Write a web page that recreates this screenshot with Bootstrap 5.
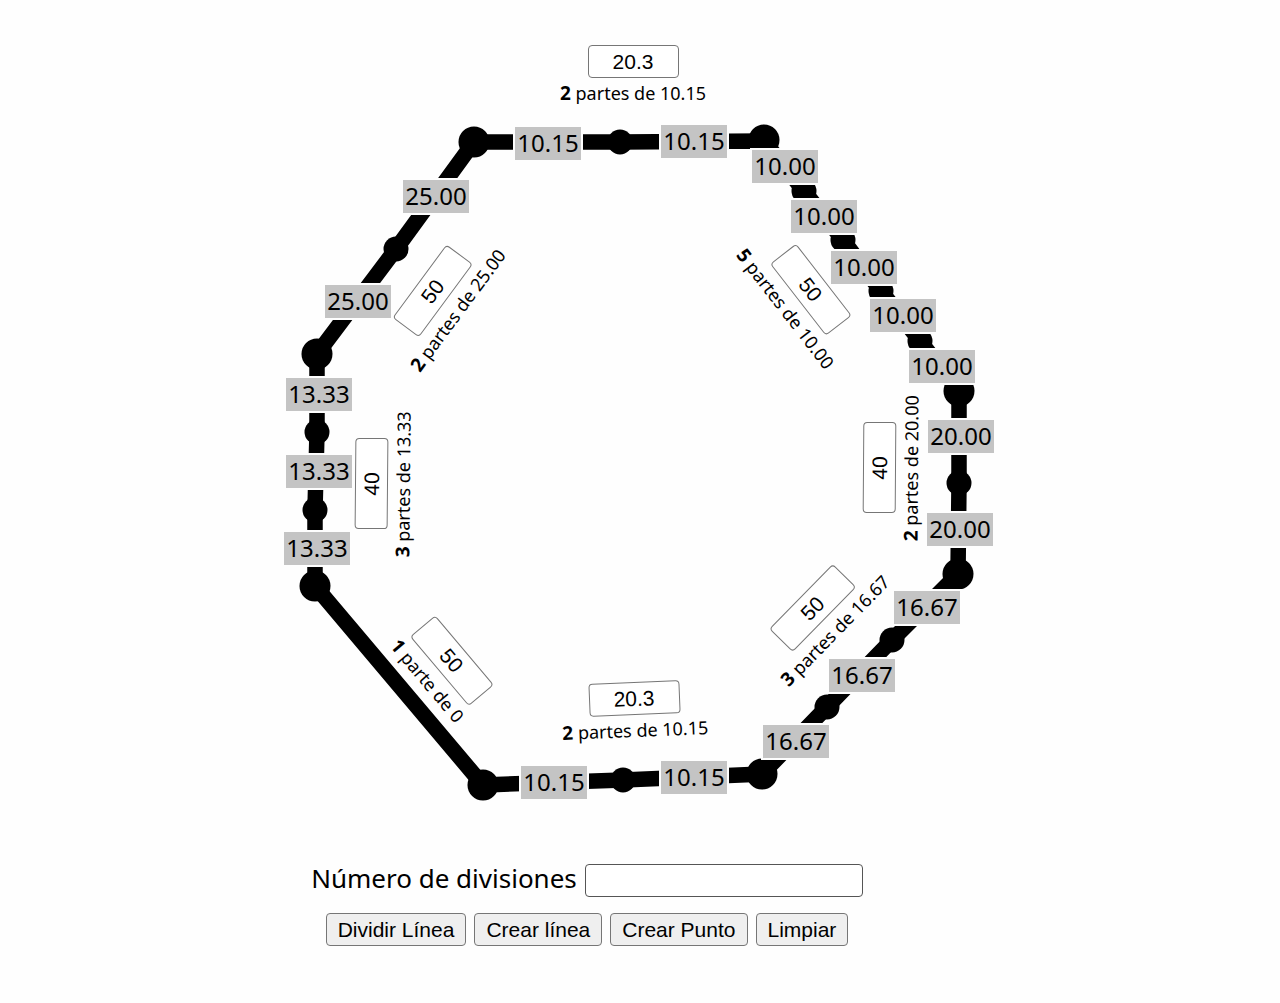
<!DOCTYPE html>
<html lang="es">
<head>
<meta charset="utf-8">
<meta name="viewport" content="width=device-width, initial-scale=1">
<title>Divisiones</title>
<link rel="stylesheet" href="https://cdn.jsdelivr.net/npm/bootstrap@5.3.0/dist/css/bootstrap.min.css">
<style>
  body { font-family: "Noto Sans", sans-serif; color: #000; background: #fefefe; }
  .board { width: 720px; }
  .plane { height: 840px; }
  .plane svg { width: 720px; height: 840px; }
  /* items on the plane are centred on their own point (--x, --y) */
  .measure, .side { left: calc(var(--x) * 1px); top: calc(var(--y) * 1px); }
  .measure {
    width: 66px; height: 33px; margin: -16px 0 0 -33px;
    background: #c4c4c4; outline: 2px solid #fefefe;
    font-size: 24px; line-height: 31px; text-align: center;
  }
  .side {
    width: 160px; height: 66px; margin: -16px 0 0 -80px;
    transform: rotate(calc(var(--a) * 1deg)); transform-origin: 80px 16px;
  }
  .field, .action {
    font-family: "Liberation Sans", Arial, sans-serif; font-size: 21px; line-height: 24px;
    color: #000; border: 1px solid #767676; border-radius: 4px; height: 33px;
  }
  .field { background: #fff; padding: 0 4px; }
  .side .field { width: 91px; text-align: center; }
  .side label { font-size: 18px; line-height: 30px; white-space: nowrap; }
  .side strong { font-size: 19px; }
  .controls { width: 614px; }
  .controls label { font-size: 26px; line-height: 28px; }
  .count { width: 278px; border-color: #555; }
  .action { background: #efefef; padding: 0 11px; }
</style>
<script src="https://cdn.jsdelivr.net/npm/bootstrap@5.3.0/dist/js/bootstrap.bundle.min.js"></script>
</head>
<body>
<main class="board mx-auto">
  <section class="plane position-relative">
    <svg viewBox="280 0 720 840" class="d-block" aria-hidden="true">
      <path d="M474 142 620 142 764 141 804 191 843 240 881 291 920 341 959 391 959 483 958 574 892 640 827 707 762 774 623 780 483 785 315 586 315 510 317 432 317 354 396 249Z" fill="none" stroke="#000" stroke-width="15.5"/>
      <g>
        <circle cx="474" cy="142" r="15.5"/><circle cx="764" cy="140" r="15.5"/>
        <circle cx="959" cy="391" r="15.5"/><circle cx="958" cy="574" r="15.5"/>
        <circle cx="762" cy="774" r="15.5"/><circle cx="483" cy="785" r="15.5"/>
        <circle cx="315" cy="586" r="15.5"/><circle cx="317" cy="354" r="15.5"/>
      </g>
      <g>
        <circle cx="620" cy="142" r="12.5"/><circle cx="804" cy="191" r="12.5"/>
        <circle cx="843" cy="240" r="12.5"/><circle cx="881" cy="291" r="12.5"/>
        <circle cx="920" cy="341" r="12.5"/><circle cx="959" cy="483" r="12.5"/>
        <circle cx="892" cy="640" r="12.5"/><circle cx="827" cy="707" r="12.5"/>
        <circle cx="623" cy="780" r="12.5"/><circle cx="315" cy="510" r="12.5"/>
        <circle cx="317" cy="432" r="12.5"/><circle cx="396" cy="249" r="12.5"/>
      </g>
    </svg>

    <span class="measure position-absolute" style="--x:268;--y:143">10.15</span>
    <span class="measure position-absolute" style="--x:414;--y:141">10.15</span>
    <span class="measure position-absolute" style="--x:505;--y:166">10.00</span>
    <span class="measure position-absolute" style="--x:544;--y:216">10.00</span>
    <span class="measure position-absolute" style="--x:584;--y:267">10.00</span>
    <span class="measure position-absolute" style="--x:623;--y:315">10.00</span>
    <span class="measure position-absolute" style="--x:662;--y:366">10.00</span>
    <span class="measure position-absolute" style="--x:681;--y:436">20.00</span>
    <span class="measure position-absolute" style="--x:680;--y:529">20.00</span>
    <span class="measure position-absolute" style="--x:647;--y:607">16.67</span>
    <span class="measure position-absolute" style="--x:582;--y:675">16.67</span>
    <span class="measure position-absolute" style="--x:516;--y:741">16.67</span>
    <span class="measure position-absolute" style="--x:414;--y:777">10.15</span>
    <span class="measure position-absolute" style="--x:274;--y:782">10.15</span>
    <span class="measure position-absolute" style="--x:37;--y:548">13.33</span>
    <span class="measure position-absolute" style="--x:39;--y:471">13.33</span>
    <span class="measure position-absolute" style="--x:39;--y:394">13.33</span>
    <span class="measure position-absolute" style="--x:78;--y:301">25.00</span>
    <span class="measure position-absolute" style="--x:156;--y:196">25.00</span>

    <div class="side position-absolute d-flex flex-column align-items-center" style="--x:353;--y:61;--a:0">
      <input class="field" id="s1" type="text" value="20.3"><label for="s1"><strong>2</strong> partes de 10.15</label>
    </div>
    <div class="side position-absolute d-flex flex-column align-items-center" style="--x:531;--y:289;--a:52.2">
      <input class="field" id="s2" type="text" value="50"><label for="s2"><strong>5</strong> partes de 10.00</label>
    </div>
    <div class="side position-absolute d-flex flex-column align-items-center" style="--x:599;--y:468;--a:-89.6">
      <input class="field" id="s3" type="text" value="40"><label for="s3"><strong>2</strong> partes de 20.00</label>
    </div>
    <div class="side position-absolute d-flex flex-column align-items-center" style="--x:532;--y:608;--a:-45.6">
      <input class="field" id="s4" type="text" value="50"><label for="s4"><strong>3</strong> partes de 16.67</label>
    </div>
    <div class="side position-absolute d-flex flex-column align-items-center" style="--x:354;--y:698;--a:-2.3">
      <input class="field" id="s5" type="text" value="20.3"><label for="s5"><strong>2</strong> partes de 10.15</label>
    </div>
    <div class="side position-absolute d-flex flex-column align-items-center" style="--x:172;--y:660;--a:49.8">
      <input class="field" id="s6" type="text" value="50"><label for="s6"><strong>1</strong> parte de 0</label>
    </div>
    <div class="side position-absolute d-flex flex-column align-items-center" style="--x:91;--y:484;--a:-89.5">
      <input class="field" id="s7" type="text" value="40"><label for="s7"><strong>3</strong> partes de 13.33</label>
    </div>
    <div class="side position-absolute d-flex flex-column align-items-center" style="--x:152;--y:291;--a:-53.6">
      <input class="field" id="s8" type="text" value="50"><label for="s8"><strong>2</strong> partes de 25.00</label>
    </div>
  </section>

  <form class="controls d-flex flex-column align-items-center pt-4 pb-5">
    <div class="d-flex align-items-start gap-2 mb-3">
      <label for="count">Número de divisiones</label>
      <input class="field count" id="count" type="text">
    </div>
    <div class="d-flex gap-2">
      <button class="action" type="button">Dividir Línea</button>
      <button class="action" type="button">Crear línea</button>
      <button class="action" type="button">Crear Punto</button>
      <button class="action" type="button">Limpiar</button>
    </div>
  </form>
</main>
</body>
</html>
